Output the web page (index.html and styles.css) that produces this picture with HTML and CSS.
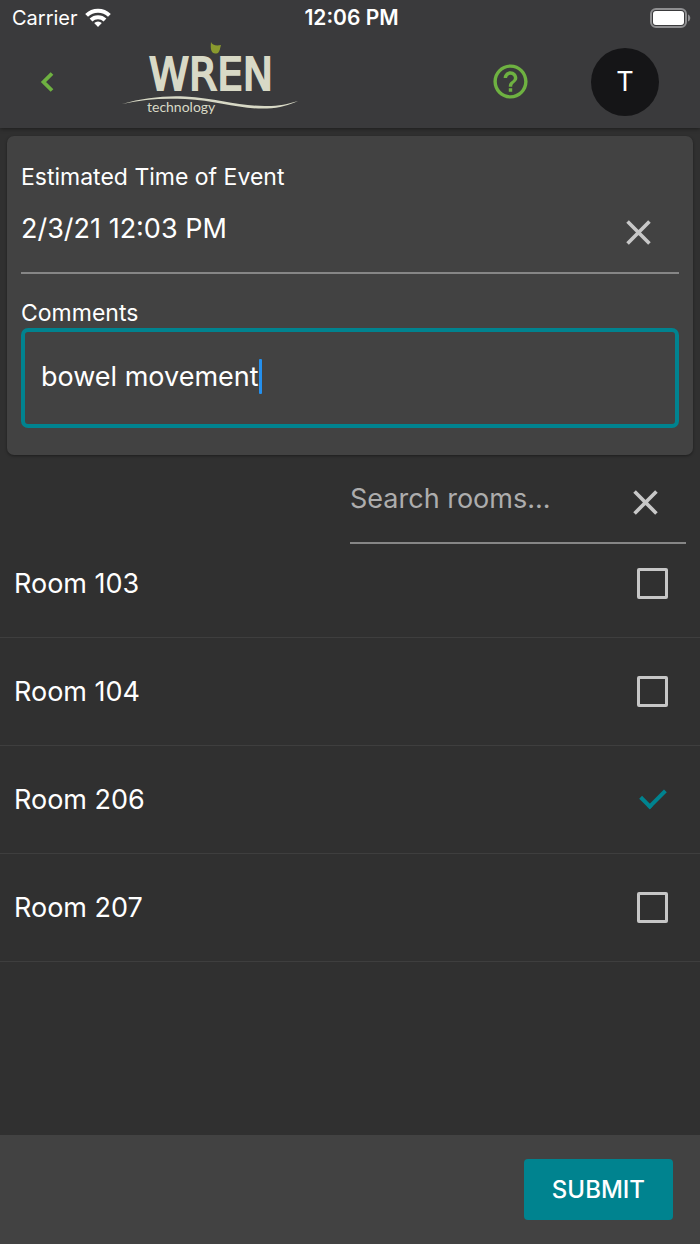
FILE: index.html
```html
<!DOCTYPE html>
<html lang="en">
<head>
<meta charset="utf-8">
<meta name="viewport" content="width=device-width, initial-scale=1">
<title>WREN technology</title>
<link rel="stylesheet" href="styles.css">
</head>
<body>
<header class="header">
  <div class="status">
    <div class="carrier">
      <span>Carrier</span>
      <svg class="wifi" viewBox="0 0 26 19" aria-hidden="true">
        <g fill="none" stroke="#fff" stroke-width="4">
          <path d="M1.6 7.4a16.2 16.2 0 0 1 22.8 0"/>
          <path d="M6 12a10 10 0 0 1 14 0"/>
        </g>
        <path fill="#fff" d="M13 19l-3.8-3.9a5.4 5.4 0 0 1 7.6 0z"/>
      </svg>
    </div>
    <time class="clock">12:06 PM</time>
    <svg class="battery" viewBox="0 0 41 20" aria-hidden="true">
      <rect x="1" y="1" width="35" height="18" rx="5" fill="none" stroke="#8f8f91" stroke-width="2"/>
      <rect x="3" y="3" width="31" height="14" rx="3" fill="#fff"/>
      <path d="M38 6.500c3 1 3 6 0 7z" fill="#8f8f91"/>
    </svg>
  </div>
  <div class="toolbar">
    <button class="icon-button back" aria-label="Back">
      <svg viewBox="0 0 18 24"><path d="M14 3.500L5.500 12l8.500 8.500" fill="none" stroke="#6eb141" stroke-width="3.800"/></svg>
    </button>
    <svg class="logo" viewBox="0 0 178 80" role="img" aria-label="WREN technology">
      <text class="logo-name" x="28" y="48">WREN</text>
      <path d="M1 62C22 56 43 53.500 64 54.500c33 2 55 10 82 9.500 12 0 21-2 31-5-9 4-18 7-31 7.500-28 1-50-8-82-9.500-22-1-42 0-63 5z" fill="#d8d9c6"/>
      <text class="logo-sub" x="26" y="70">technology</text>
      <path d="M90 0c1 3 5 4 10 3-1 3-1 6-3 8-6 2-8-2-7-11z" fill="#8a9a2e"/>
    </svg>
    <button class="icon-button help" aria-label="Help">
      <svg viewBox="0 0 24 24" fill="#6eb141"><path d="M11 18h2v-2h-2v2zm1-16C6.480 2 2 6.480 2 12s4.480 10 10 10 10-4.480 10-10S17.520 2 12 2zm0 18c-4.410 0-8-3.590-8-8s3.590-8 8-8 8 3.590 8 8-3.590 8-8 8zm0-14c-2.210 0-4 1.790-4 4h2c0-1.100.9-2 2-2s2 .9 2 2c0 2-3 1.750-3 5h2c0-2.250 3-2.500 3-5 0-2.210-1.790-4-4-4z"/></svg>
    </button>
    <button class="avatar" aria-label="Account T">T</button>
  </div>
</header>

<main class="main">
  <section class="card">
    <label class="label" for="event-time">Estimated Time of Event</label>
    <div class="field time-field">
      <input class="text-input" id="event-time" type="text" value="2/3/21 12:03 PM">
      <button class="icon-button clear" aria-label="Clear time">
        <svg viewBox="0 0 24 24"><path d="M1.500 1.500l21 21M22.500 1.500l-21 21"/></svg>
      </button>
    </div>
    <label class="label" for="comments">Comments</label>
    <div class="comment-box">
      <input class="text-input comment-input" id="comments" type="text" value="bowel movement">
      <span class="caret"></span>
    </div>
  </section>

  <div class="field search-field">
    <input class="text-input" type="text" placeholder="Search rooms..." aria-label="Search rooms">
    <button class="icon-button clear" aria-label="Clear search">
      <svg viewBox="0 0 24 24"><path d="M1.500 1.500l21 21M22.500 1.500l-21 21"/></svg>
    </button>
  </div>

  <ul class="rooms">
    <li><label class="room"><span>Room 103</span><input class="check" type="checkbox"></label></li>
    <li><label class="room"><span>Room 104</span><input class="check" type="checkbox"></label></li>
    <li><label class="room"><span>Room 206</span><input class="check" type="checkbox" checked></label></li>
    <li><label class="room"><span>Room 207</span><input class="check" type="checkbox"></label></li>
  </ul>
</main>

<footer class="footer">
  <button class="submit">SUBMIT</button>
</footer>
</body>
</html>
```
FILE: styles.css
```css
* { box-sizing: border-box; }

body {
  margin: 0;
  min-height: 100vh;
  display: flex;
  flex-direction: column;
  background: #303030;
  color: #fff;
  font-family: Inter, "Liberation Sans", sans-serif;
  font-size: 27px;
}

button, input {
  margin: 0;
  padding: 0;
  border: 0;
  background: none;
  color: inherit;
  font: inherit;
}

svg { display: block; }

.header {
  background: #3a3a3c;
  box-shadow: 0 1px 4px rgba(0, 0, 0, 0.4);
}

.status {
  display: grid;
  grid-template-columns: 1fr auto 1fr;
  align-items: center;
  height: 35px;
  padding: 0 9px 0 12px;
  font-size: 20px;
}

.carrier {
  display: flex;
  align-items: center;
  gap: 7px;
}

.wifi { width: 26px; height: 19px; }
.clock { font-size: 21px; font-weight: 600; }
.battery { width: 41px; height: 20px; justify-self: end; }

.toolbar {
  display: flex;
  align-items: center;
  height: 93px;
  padding: 0 41px 0 38px;
}

.icon-button {
  display: flex;
  flex: none;
  align-items: center;
  justify-content: center;
}

.back svg { width: 18px; height: 24px; }

.logo {
  width: 178px;
  height: 80px;
  margin-left: 65px;
  margin-right: auto;
  overflow: visible;
}

.logo-name {
  font-family: "DejaVu Sans Condensed", "DejaVu Sans", sans-serif;
  font-size: 45px;
  fill: #d8d9c6;
  stroke: #d8d9c6;
  stroke-width: 2px;
}

.logo-sub {
  font-family: Lato, sans-serif;
  font-size: 14px;
  fill: #d8d9c6;
}

.help { margin-right: 60px; }
.help svg { width: 41px; height: 41px; }

.avatar {
  width: 68px;
  height: 68px;
  border-radius: 50%;
  background: #151517;
}

.main { flex: 1; }

.card {
  margin: 8px 7px 0;
  padding: 27px 14px;
  border-radius: 7px;
  background: #424242;
  box-shadow: 0 1px 3px rgba(0, 0, 0, 0.4);
}

.label {
  display: block;
  font-size: 23px;
  line-height: 29px;
}

.field {
  display: flex;
  border-bottom: 2px solid #868686;
}

.field .text-input {
  flex: 1;
  min-width: 0;
  height: 72px;
}

.text-input { outline: none; }
.text-input::placeholder { color: #adadad; opacity: 1; }

.time-field { margin-bottom: 25px; }

.clear {
  width: 82px;
  height: 80px;
}

.clear svg {
  width: 25px;
  height: 25px;
  stroke: #c8c8c8;
  stroke-width: 3.500;
}

.comment-box {
  display: flex;
  align-items: center;
  height: 100px;
  padding: 0 16px 4px;
  border: 4px solid #00838f;
  border-radius: 7px;
}

.comment-input { field-sizing: content; max-width: 100%; }

.caret {
  width: 3px;
  height: 35px;
  border-radius: 1px;
  background: #2490ee;
}

.search-field {
  width: 48%;
  height: 82px;
  margin: 7px 14px 0 auto;
}

.rooms {
  margin: -14px 0 0;
  padding: 0;
  list-style: none;
}

.room {
  display: flex;
  align-items: center;
  justify-content: space-between;
  height: 108px;
  padding: 0 32px 0 14px;
  border-bottom: 1px solid #3e3e3e;
}

.check {
  appearance: none;
  width: 31px;
  height: 31px;
  border: 3px solid #c6c6c6;
  border-radius: 2px;
}

.check:checked {
  display: grid;
  place-items: center;
  border-color: transparent;
}

.check:checked::before {
  content: "";
  width: 20px;
  height: 11px;
  border: solid #00838f;
  border-width: 0 0 4px 4px;
  transform: translateY(-4px) rotate(-45deg);
}

.footer {
  display: flex;
  justify-content: flex-end;
  padding: 24px 27px;
  background: #424242;
}

.submit {
  height: 61px;
  padding: 0 28px;
  border-radius: 4px;
  background: #00838f;
  font-size: 24px;
  font-weight: 500;
}
```
